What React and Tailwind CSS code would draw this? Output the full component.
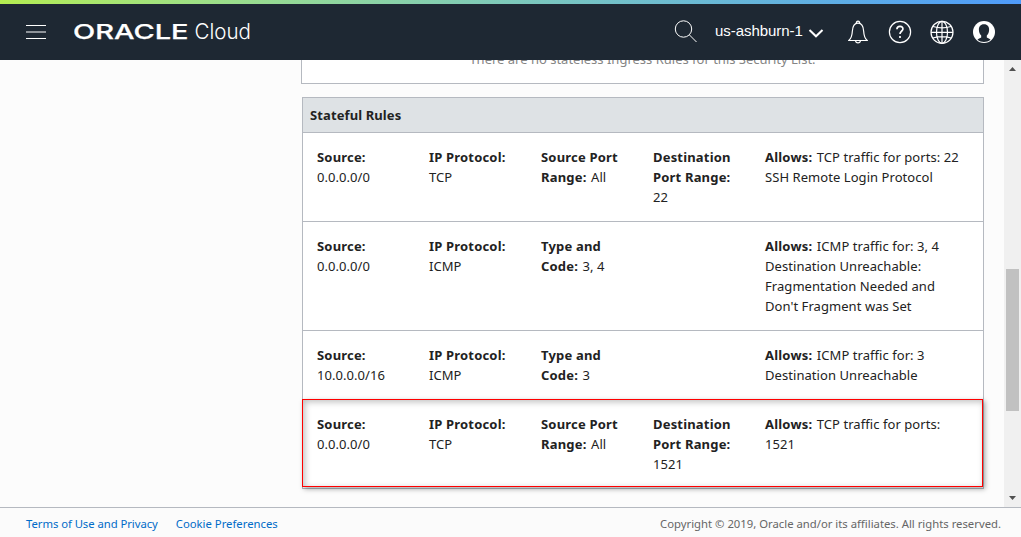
const rules = [
  {
    cells: [
      [[["Source:"]], [null, "0.0.0.0/0"]],
      [[["IP Protocol:"]], [null, "TCP"]],
      [[["Source Port"]], [["Range:"], "All"]],
      [[["Destination"]], [["Port Range:"]], [null, "22"]],
      [[["Allows:"], "TCP traffic for ports: 22"], [null, "SSH Remote Login Protocol"]],
    ],
  },
  {
    cells: [
      [[["Source:"]], [null, "0.0.0.0/0"]],
      [[["IP Protocol:"]], [null, "ICMP"]],
      [[["Type and"]], [["Code:"], "3, 4"]],
      [],
      [
        [["Allows:"], "ICMP traffic for: 3, 4"],
        [null, "Destination Unreachable:"],
        [null, "Fragmentation Needed and"],
        [null, "Don't Fragment was Set"],
      ],
    ],
  },
  {
    cells: [
      [[["Source:"]], [null, "10.0.0.0/16"]],
      [[["IP Protocol:"]], [null, "ICMP"]],
      [[["Type and"]], [["Code:"], "3"]],
      [],
      [[["Allows:"], "ICMP traffic for: 3"], [null, "Destination Unreachable"]],
    ],
  },
  {
    highlighted: true,
    cells: [
      [[["Source:"]], [null, "0.0.0.0/0"]],
      [[["IP Protocol:"]], [null, "TCP"]],
      [[["Source Port"]], [["Range:"], "All"]],
      [[["Destination"]], [["Port Range:"]], [null, "1521"]],
      [[["Allows:"], "TCP traffic for ports:"], [null, "1521"]],
    ],
  },
];

function Header() {
  return (
    <header className="relative z-20 shrink-0">
      <div className="h-1 bg-linear-to-r from-[#b4ed50] to-[#4f9bfa]" />
      <div className="flex h-14 items-center bg-[#1e2833] pl-[26px] pr-[25px] text-white">
        <div className="flex w-5 flex-col gap-[5px]">
          <span className="h-px bg-white" />
          <span className="h-[2px] bg-[#8e9399]" />
          <span className="h-px bg-white" />
        </div>
        <svg className="ml-7 h-6 w-[180px]" viewBox="0 0 180 24" fill="#fff">
          <text x="-1" y="19" fontFamily="Inter, sans-serif" fontWeight="500" fontSize="20.5" textLength="115.5" lengthAdjust="spacingAndGlyphs" stroke="#fff" strokeWidth="0.25">ORACLE</text>
          <text x="120.5" y="19.3" fontFamily="Inter, sans-serif" fontWeight="300" fontSize="21.5" textLength="56.5" lengthAdjust="spacingAndGlyphs">Cloud</text>
        </svg>
        <div className="ml-auto flex items-center">
          <svg className="mr-[17px] -mt-0.5 h-6 w-6" viewBox="0 0 24 24" fill="none" stroke="#fff" strokeWidth="1">
            <circle cx="9.5" cy="10" r="8.2" />
            <path d="M15.500 16 22.500 23" />
          </svg>
          <span className="w-[88px] whitespace-nowrap pb-0.5 font-['Liberation_Sans',sans-serif] text-[15px] tracking-[-0.05px]">us-ashburn-1</span>
          <svg className="mr-6 ml-[5px] h-4 w-4" viewBox="0 0 16 16" fill="none" stroke="#fff" strokeWidth="2">
            <path d="m1.500 6 6.500 6.300L14.500 6" />
          </svg>
          <svg className="h-6 w-5" viewBox="0 0 20 24" fill="none" stroke="#fff" strokeWidth="1.2">
            <path d="M.8 20.500h18.400c-2.800-2.500-3.300-4.500-3.500-9C15.400 6 13.500 3.200 10 3.200S4.600 6 4.300 11.500C4.100 16 3.600 18 .8 20.500Z" />
            <path d="M8.300 3.200c0-2.900 3.400-2.900 3.400 0M7.600 20.700c.3 3 4.500 3 4.800 0" />
          </svg>
          <svg className="ml-5 h-6 w-6" viewBox="0 0 24 24" fill="none" stroke="#fff" strokeWidth="1.2">
            <circle cx="12" cy="12" r="10.600" />
            <path strokeWidth="1.700" d="M8.900 9.200c.2-4 6.500-3.500 6 0-.3 2.100-2.900 2.200-2.900 4.800M12 16v2" />
          </svg>
          <svg className="ml-[18px] h-6 w-6" viewBox="0 0 24 24" fill="none" stroke="#fff" strokeWidth="1.200">
            <circle cx="12" cy="12.300" r="11" />
            <ellipse cx="12" cy="12.300" rx="5.500" ry="11" />
            <path d="M12 1.300v22M1 12.300h22M3 6.500c5 1.500 13 1.500 18 0M3 18c5-1.500 13-1.500 18 0" />
          </svg>
          <svg className="ml-[18px] h-6 w-6" viewBox="0 0 24 24">
            <circle cx="12" cy="12" r="11" fill="#fff" />
            <path fill="#1e2833" d="M12 4.300c-3.600 0-5.300 2.500-5.100 5.700.1 2.500 1 4.300 2.300 5.400v2.200c-1.400.7-2.700 1.100-3.700 2.100 3.700 3 9.300 3 13 0-1-1-2.300-1.400-3.700-2.100v-2.200c1.300-1.100 2.200-2.900 2.300-5.400.2-3.200-1.500-5.700-5.100-5.700Z" />
          </svg>
        </div>
      </div>
    </header>
  );
}

function Rule({ rule }) {
  return (
    <div
      className={
        rule.highlighted
          ? "relative grid h-[88px] grid-cols-[112px_112px_112px_112px_1fr] p-[14px]"
          : "grid grid-cols-[112px_112px_112px_112px_1fr] border-b border-[#b5b9c0] p-[14px]"
      }
    >
      {rule.highlighted && (
        <div className="absolute -top-px -left-px h-[88px] w-[681px] border border-[#ff0000] shadow-[2px_2px_5px_rgba(0,0,0,0.35),inset_2px_2px_6px_rgba(0,0,0,0.25)]" />
      )}
      {rule.cells.map((lines, i) => (
        <div key={i} className="whitespace-nowrap tracking-[0.06px]">
          {lines.map(([label, value], j) => (
            <div key={j} className="h-5">
              {label && <b className={value ? "mr-px font-bold tracking-[0.2px]" : "font-bold tracking-[0.18px]"}>{label[0]}</b>}
              {label && value && " "}
              {value}
            </div>
          ))}
        </div>
      ))}
    </div>
  );
}

function Scrollbar() {
  return (
    <div className="flex w-[17px] shrink-0 flex-col items-center bg-[#f0f0f0]">
      <svg className="h-[17px] w-[17px]" viewBox="0 0 17 17" fill="#505050"><path d="m5 11 3.500-4L12 11Z" /></svg>
      <div className="mt-48 h-[142px] w-[13px] bg-[#c1c1c1]" />
      <svg className="mt-auto h-[17px] w-[17px]" viewBox="0 0 17 17" fill="#505050"><path d="m5 6 3.500 4L12 6Z" /></svg>
    </div>
  );
}

export default function App() {
  return (
    <div className="flex h-[537px] w-[1021px] flex-col overflow-hidden bg-[#fcfcfc] font-['Noto_Sans',sans-serif] text-[13px] leading-5 text-[#222]">
      <Header />
      <div className="flex min-h-0 flex-1">
        <main className="flex-1 overflow-hidden pl-[301px]">
          <div className="-mt-5 h-11 w-[683px] border border-[#b5b9c0] bg-white pt-2 text-center text-[#858585]">
            There are no stateless Ingress Rules for this Security List.
          </div>
          <section className="mt-[13px] ml-px w-[682px] border border-[#b5b9c0] bg-white">
            <h2 className="h-[35px] border-b border-[#b5b9c0] bg-[#dee2e5] pt-[7px] pl-[7px] font-bold tracking-[0.1px]">Stateful Rules</h2>
            {rules.map((rule, i) => <Rule key={i} rule={rule} />)}
          </section>
        </main>
        <Scrollbar />
      </div>
      <footer className="flex h-[30px] shrink-0 items-center border-t border-[#b5b9c0] bg-[#fbfbfb] pt-[3px] pr-5 pl-[26px] text-[11.3px] text-[#666]">
        <a className="mr-[18px] tracking-[-0.05px] text-[#006bc8]">Terms of Use and Privacy</a>
        <a className="text-[#006bc8]">Cookie Preferences</a>
        <span className="ml-auto">Copyright © 2019, Oracle and/or its affiliates. All rights reserved.</span>
      </footer>
    </div>
  );
}
